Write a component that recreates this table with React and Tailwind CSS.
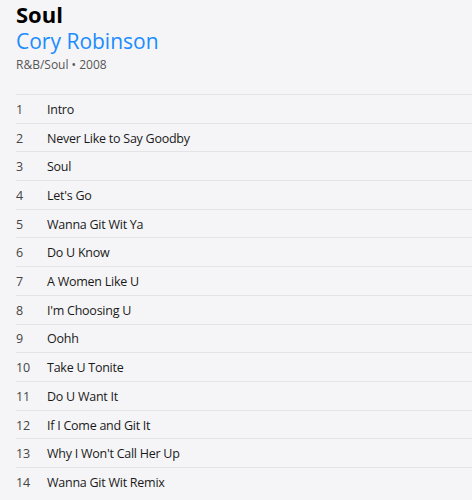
const tracks = [
  "Intro",
  "Never Like to Say Goodby",
  "Soul",
  "Let's Go",
  "Wanna Git Wit Ya",
  "Do U Know",
  "A Women Like U",
  "I'm Choosing U",
  "Oohh",
  "Take U Tonite",
  "Do U Want It",
  "If I Come and Git It",
  "Why I Won't Call Her Up",
  "Wanna Git Wit Remix",
];

export default function App() {
  return (
    <div className="w-[472px] h-[500px] overflow-hidden bg-[#f5f5f7] font-['Open_Sans',sans-serif]">
      <div className="pl-4">
        <div className="text-[22px] leading-[28px] font-bold text-black">Soul</div>
        <div className="text-[21px] leading-[26px] text-[#1a8cff]">Cory Robinson</div>
        <div className="mt-[3px] text-[12px] leading-[16px] text-[#555]">R&amp;B/Soul • 2008</div>
        <div className="mt-[21px]">
          {tracks.map((t, i) => (
            <div key={i} className="h-[28.7px] border-t border-[#e4e4e6] flex items-center pt-[3px] text-[12.5px] tracking-[-0.25px] text-[#1a1a1a]">
              <span className="w-[31px] text-[#444]">{i + 1}</span>
              <span>{t}</span>
            </div>
          ))}
        </div>
      </div>
    </div>
  );
}
